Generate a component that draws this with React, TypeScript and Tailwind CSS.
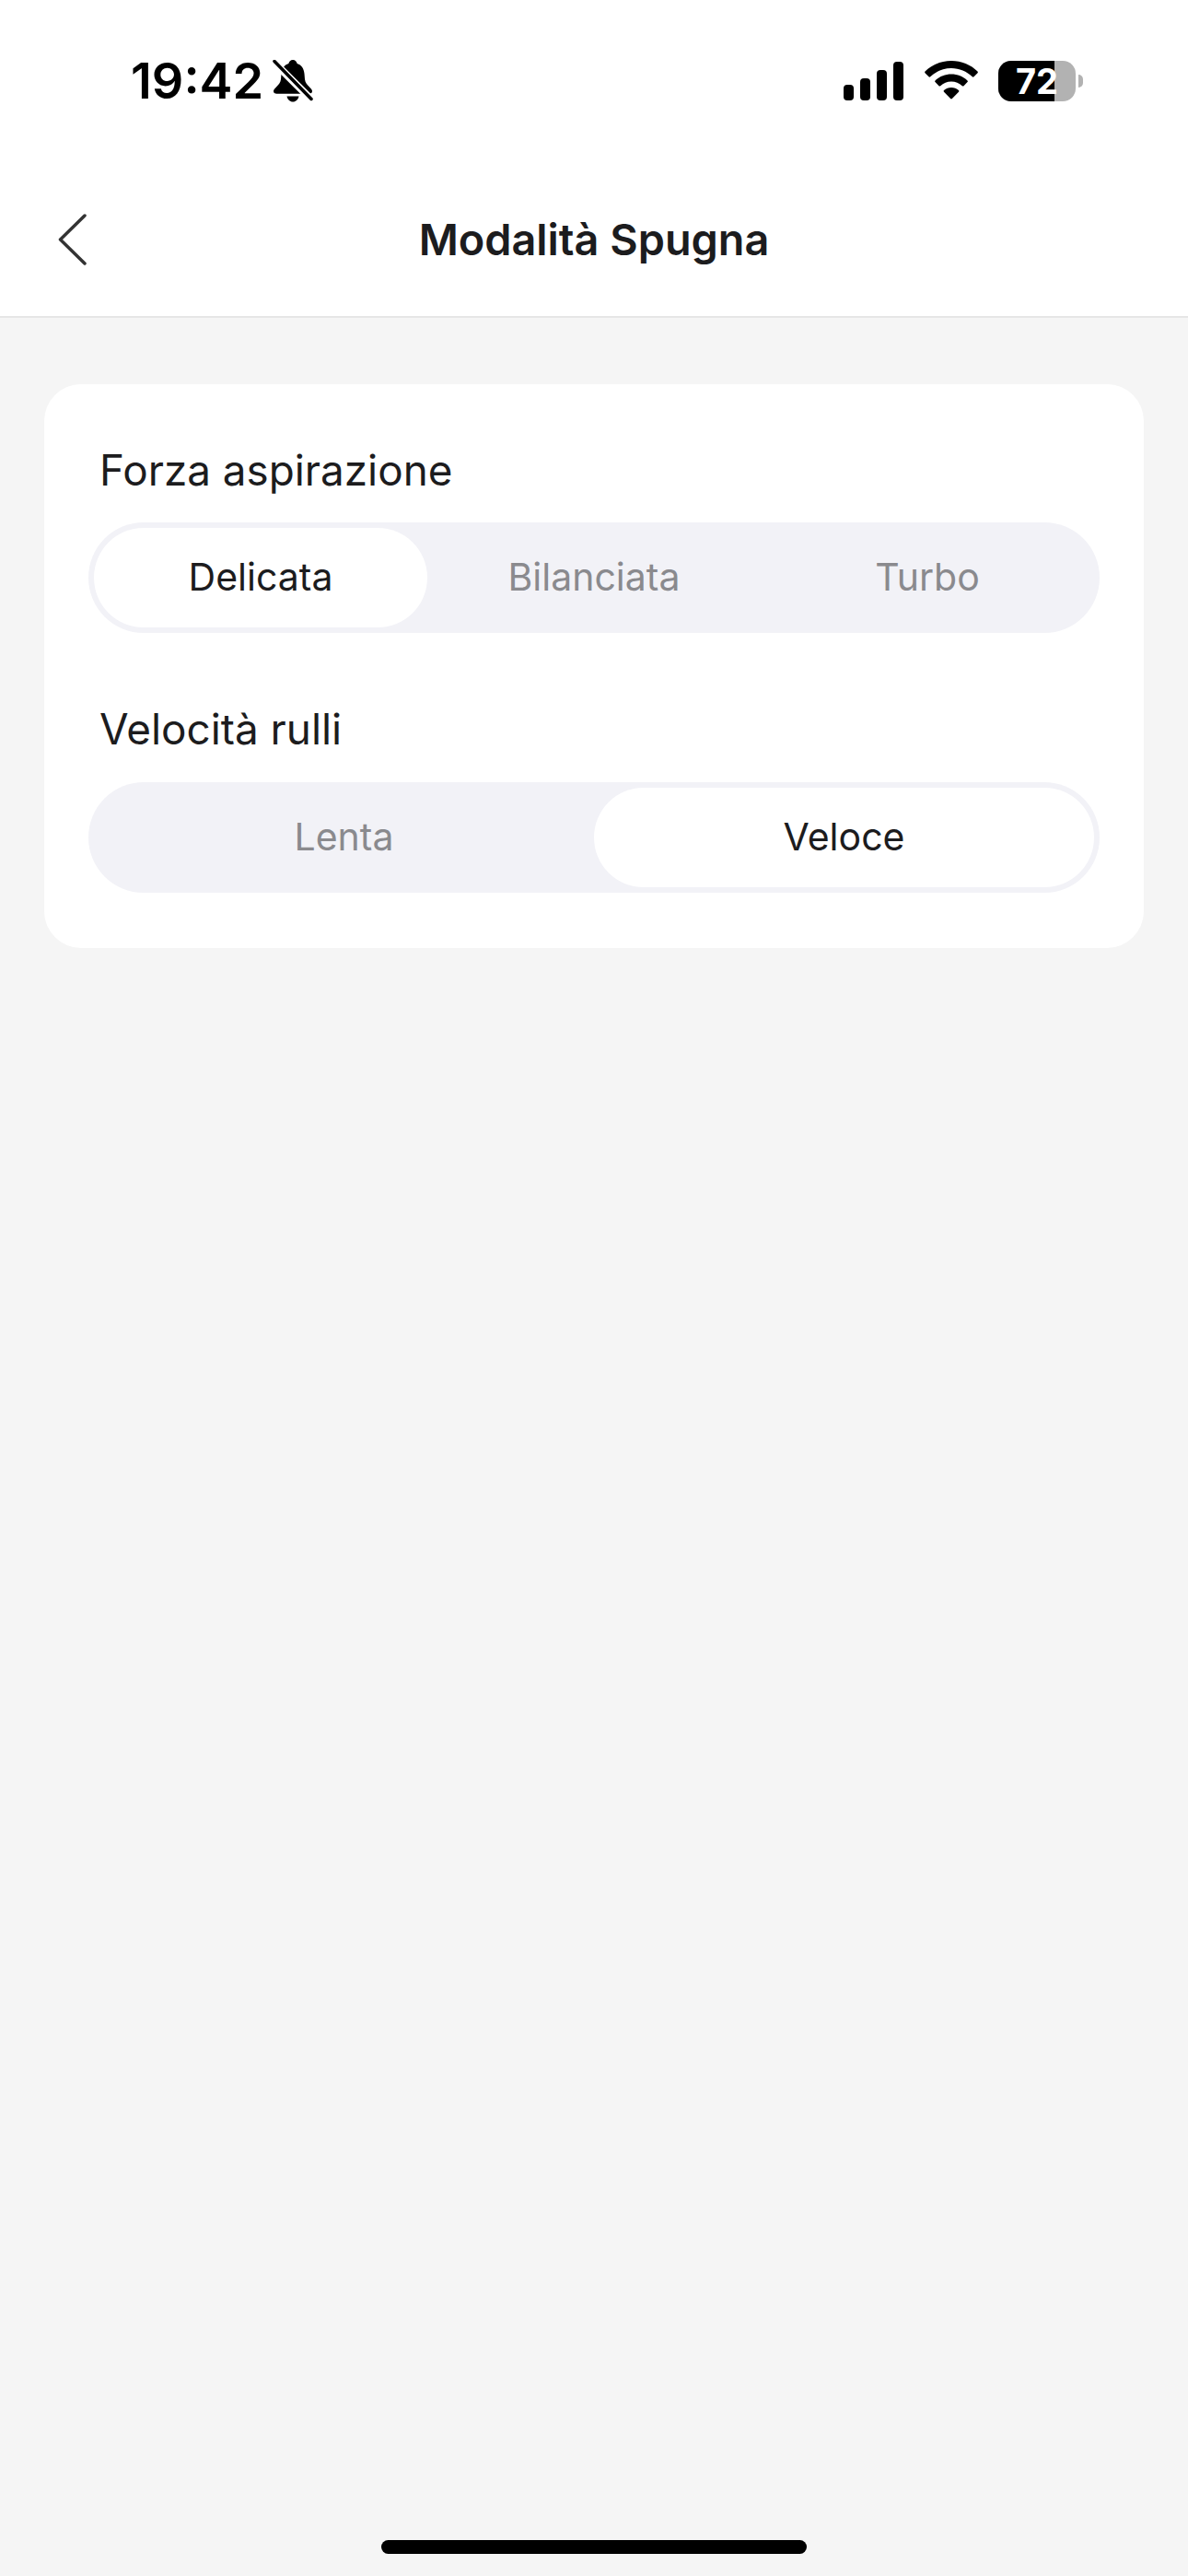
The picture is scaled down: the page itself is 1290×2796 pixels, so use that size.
import { useState } from "react";

function SignalIcon() {
  return (
    <svg width="66" height="42" viewBox="0 0 66 42" fill="#000">
      <rect x="0" y="25" width="11" height="17" rx="4" />
      <rect x="18" y="18" width="11" height="24" rx="4" />
      <rect x="36" y="9" width="11" height="33" rx="4" />
      <rect x="54" y="0" width="11" height="42" rx="4" />
    </svg>
  );
}

function WifiIcon() {
  return (
    <svg width="58" height="44" viewBox="0 0 58 44" fill="#000">
      <path d="M29 0C18 0 8 4.200 0.500 11.500C0 12 0 12.700 0.500 13.200L4.500 17.300C5 17.800 5.700 17.800 6.200 17.300C12.200 11.500 20.300 8 29 8C37.700 8 45.800 11.500 51.800 17.300C52.300 17.800 53 17.800 53.500 17.300L57.500 13.200C58 12.700 58 12 57.500 11.500C50 4.200 40 0 29 0Z" />
      <path d="M29 14.500C22.300 14.500 16.200 17 11.500 21.400C11 21.900 11 22.600 11.500 23.100L15.500 27.200C16 27.700 16.700 27.700 17.200 27.200C20.400 24.300 24.500 22.600 29 22.600C33.500 22.600 37.600 24.300 40.800 27.200C41.300 27.700 42 27.700 42.500 27.200L46.500 23.100C47 22.600 47 21.900 46.500 21.400C41.800 17 35.700 14.500 29 14.500Z" />
      <path d="M29 29C26 29 23.200 30.100 21 32C20.500 32.500 20.500 33.200 21 33.700L28.100 41C28.600 41.500 29.400 41.500 29.900 41L37 33.700C37.500 33.200 37.500 32.500 37 32C34.800 30.100 32 29 29 29Z" />
    </svg>
  );
}

function MutedBell() {
  return (
    <svg width="44" height="46" viewBox="0 0 44 46" fill="#000">
      <path d="M22 0C19.500 0 17.800 1.700 17.400 4C12.500 5.500 10 9.500 9.500 15L9 21C8.700 24.500 6.500 27 3.500 30C2.200 31.300 1 32.500 1 34C1 35.800 2.400 36.800 4.500 36.800H39.500C41.600 36.800 43 35.800 43 34C43 32.500 41.800 31.300 40.500 30C37.500 27 35.300 24.500 35 21L34.500 15C34 9.500 31.500 5.500 26.600 4C26.200 1.700 24.500 0 22 0Z" />
      <path d="M15.500 39.500C16.200 43 18.800 45.500 22 45.500C25.200 45.500 27.800 43 28.500 39.500Z" />
      <path d="M1 2L42 43" stroke="#fff" strokeWidth="8" />
      <path d="M2 1.500L42 42.500" stroke="#000" strokeWidth="3.500" strokeLinecap="round" />
    </svg>
  );
}

function StatusBar() {
  return (
    <div className="flex h-[174px] items-center justify-between pl-[142px] pr-[114px] pt-[1px]">
      <div className="flex items-center gap-[10px]">
        <span className="text-[54px] font-semibold leading-none text-black">19:42</span>
        <MutedBell />
      </div>
      <div className="flex items-center">
        <SignalIcon />
        <div className="ml-[22px] mr-[22px]">
          <WifiIcon />
        </div>
        <div className="relative flex h-[44px] w-[84px] items-center overflow-hidden rounded-[14px] bg-[#b2b2b2]">
          <div className="h-full w-[61px] bg-black" />
          <span className="absolute inset-0 flex items-center justify-center text-[38px] font-bold leading-none text-white">
            72
          </span>
        </div>
        <div className="ml-[3px] h-[14px] w-[5px] rounded-r-full bg-[#b2b2b2]" />
      </div>
    </div>
  );
}

function NavBar() {
  return (
    <div className="relative flex h-[171px] items-center justify-center border-b-2 border-[#e6e6e6] pt-[3px]">
      <button className="absolute left-[60px] top-[56px]">
        <svg width="36" height="60" viewBox="0 0 36 60" fill="none">
          <path
            d="M32 4L5.500 30L32 56"
            stroke="#333"
            strokeWidth="3.500"
            strokeLinecap="round"
            strokeLinejoin="round"
          />
        </svg>
      </button>
      <h1 className="text-[46.8px] font-semibold text-[#1c1c1e]">Modalità Spugna</h1>
    </div>
  );
}

interface SegmentedProps {
  options: string[];
  initial: number;
}

function Segmented({ options, initial }: SegmentedProps) {
  const [selected, setSelected] = useState(initial);

  return (
    <div className="flex h-[120px] rounded-full bg-[#f2f2f7] p-[6px]">
      {options.map((option, index) => (
        <button
          key={option}
          onClick={() => setSelected(index)}
          className={
            index === selected
              ? "flex-1 rounded-full bg-white text-[41px] text-[#1c1c1e]"
              : "flex-1 rounded-full text-[41px] text-[#8a8a8e]"
          }
        >
          {option}
        </button>
      ))}
    </div>
  );
}

export default function App() {
  return (
    <div
      className="flex h-[2796px] flex-col bg-[#f5f5f5]"
      style={{ fontFamily: "Inter, sans-serif" }}
    >
      <div className="bg-white">
        <StatusBar />
        <NavBar />
      </div>

      <div className="px-[48px] pt-[72px]">
        <div className="rounded-[40px] bg-white px-[48px] pb-[60px] pt-[62px]">
          <div className="mb-[24px] pl-[12px] text-[45.8px] leading-[64px] text-[#1c1c1e]">
            Forza aspirazione
          </div>
          <Segmented options={["Delicata", "Bilanciata", "Turbo"]} initial={0} />
          <div className="mb-[25px] mt-[73px] pl-[12px] text-[45.8px] leading-[64px] text-[#1c1c1e]">
            Velocità rulli
          </div>
          <Segmented options={["Lenta", "Veloce"]} initial={1} />
        </div>
      </div>

      <div className="mt-auto flex justify-center pb-[24px]">
        <div className="h-[15px] w-[462px] rounded-full bg-black" />
      </div>
    </div>
  );
}
